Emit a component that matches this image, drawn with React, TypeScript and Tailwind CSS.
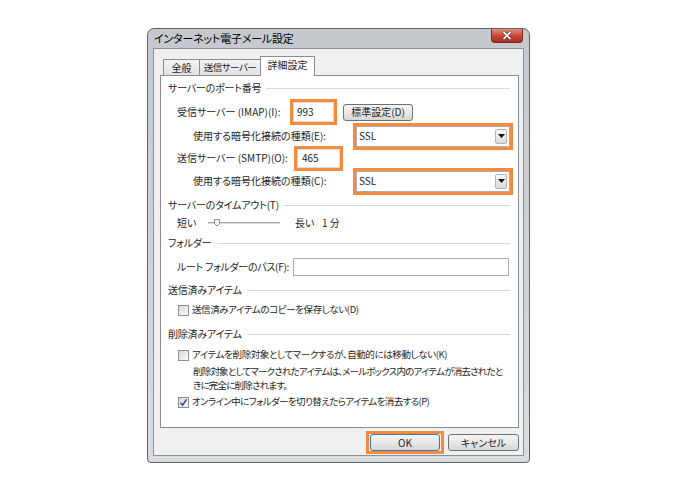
import React from 'react';

const ORANGE = 'border-[3px] border-[#f68b3d]';

function Section({ label, mt }: { label: string; mt: string }) {
  return (
    <div className={`flex items-center h-[18px] pl-[7px] pr-[8px] gap-[5px] ${mt}`}>
      <span className="whitespace-nowrap tracking-[-0.2px]">{label}</span>
      <div className="flex-1 h-px bg-[#d5d9dd]" />
    </div>
  );
}

function Checkbox({ checked }: { checked?: boolean }) {
  return (
    <span className="w-[11px] h-[11px] border border-[#8e8f8f] bg-gradient-to-br from-[#d8d8d8] to-[#fbfbfb] flex items-center justify-center shrink-0">
      {checked && (
        <svg viewBox="0 0 9 9" className="w-[9px] h-[9px]">
          <path d="M1.5 4.8 L3.6 7.2 L7.6 1.4" fill="none" stroke="#2d4b8e" strokeWidth={1.5} />
        </svg>
      )}
    </span>
  );
}

function Combo() {
  return (
    <div className={`${ORANGE} w-[160px] h-[27px] flex`}>
      <div className="flex-1 bg-white border border-[#abadb3] flex items-center pl-[2px] pr-[2px]">
        <span className="flex-1">SSL</span>
        <span className="w-[12px] h-[15px] border border-[#b5b5b5] rounded-[2px] bg-gradient-to-b from-[#f7f7f7] to-[#dcdcdc] flex items-center justify-center">
          <svg width="7" height="4" viewBox="0 0 7 4">
            <path d="M0 0h7L3.5 4z" fill="#111" />
          </svg>
        </span>
      </div>
    </div>
  );
}

function WinButton({ label, def, w }: { label: string; def?: boolean; w: string }) {
  return (
    <div
      className={`${w} h-[17px] flex items-center justify-center rounded-[3px] border ${
        def ? 'border-[#3d7bad]' : 'border-[#707070]'
      } bg-gradient-to-b from-[#f4f4f4] via-[#e9e9e9] to-[#d6d6d6] whitespace-nowrap`}
    >
      {label}
    </div>
  );
}

export default function App() {
  return (
    <div className="w-[676px] h-[492px] bg-white pt-[28px] pl-[147px] text-[10px] leading-none text-[#1e1e1e] font-['Noto_Sans_CJK_JP',sans-serif] [font-feature-settings:'palt']">
      {/* window frame */}
      <div className="w-[383px] h-[435px] border border-[#5f6368] rounded-t-[7px] rounded-b-[4px] bg-gradient-to-b from-[#c5c9cd] to-[#d9dcdf] flex flex-col px-[5px] pb-[6px]">
        {/* title bar */}
        <div className="h-[19px] flex items-start justify-between">
          <span className="self-center text-[11px] text-black pl-px tracking-[-0.2px]">インターネット電子メール設定</span>
          <div className="mr-[1px] w-[32px] h-[14px] rounded-b-[4px] border border-[#7a2a22] border-t-0 bg-gradient-to-b from-[#e28f7f] via-[#c8493a] to-[#a92c1f] flex items-center justify-center">
            <svg width="10" height="9" viewBox="0 0 10 9">
              <path d="M1.5 1 L8.5 8 M8.5 1 L1.5 8" stroke="#4a1510" strokeWidth={3} />
              <path d="M1.5 1 L8.5 8 M8.5 1 L1.5 8" stroke="#fff" strokeWidth={1.8} />
            </svg>
          </div>
        </div>

        {/* client area */}
        <div className="flex-1 border border-[#8b9095] bg-[#f0f0f0] flex flex-col pt-[7px] pl-[6px] pr-[4px] pb-px">
          {/* tabs */}
          <div className="h-[20px] flex items-end pl-[3px] whitespace-nowrap">
            <div className="w-[37px] h-[17px] border border-[#898c95] bg-gradient-to-b from-[#f4f4f4] to-[#e2e2e2] flex items-center justify-center">
              全般
            </div>
            <div className="w-[62px] h-[17px] -ml-px border border-[#898c95] bg-gradient-to-b from-[#f4f4f4] to-[#e2e2e2] flex items-center justify-center text-[9.5px] tracking-[-0.5px]">
              送信サーバー
            </div>
            <div className="relative z-10 w-[55px] h-[20px] -ml-px border border-b-0 border-[#898c95] bg-white flex items-start justify-center pt-[3px]">
              詳細設定
            </div>
          </div>

          {/* tab panel */}
          <div className="-mt-px h-[353px] border border-[#898c95] bg-white flex flex-col whitespace-nowrap">
            <Section label="サーバーのポート番号" mt="mt-[3px]" />

            <div className="flex items-center h-[18px] mt-[6px] pl-[16px]">
              <span className="w-[113px]">受信サーバー (IMAP)(I):</span>
              <div className={`${ORANGE} w-[47px] h-[26px] flex`}>
                <div className="flex-1 bg-white border border-[#d9dbe0] flex items-center pl-[3px]">993</div>
              </div>
              <div className="ml-[6px]">
                <WinButton label="標準設定(D)" w="w-[70px]" />
              </div>
            </div>

            <div className="flex items-center h-[18px] mt-[6px] pl-[32px]">
              <span className="w-[160px]">使用する暗号化接続の種類(E):</span>
              <Combo />
            </div>

            <div className="flex items-center h-[18px] mt-[4px] pl-[16px]">
              <span className="w-[117px]">送信サーバー (SMTP)(O):</span>
              <div className={`${ORANGE} w-[49px] h-[25px] flex`}>
                <div className="flex-1 bg-white border border-[#d9dbe0] flex items-center pl-[4px]">465</div>
              </div>
            </div>

            <div className="flex items-center h-[18px] mt-[5px] pl-[32px]">
              <span className="w-[160px]">使用する暗号化接続の種類(C):</span>
              <Combo />
            </div>

            <Section label="サーバーのタイムアウト(T)" mt="mt-[6px]" />

            <div className="flex items-center h-[18px] pl-[16px]">
              <span className="w-[31px]">短い</span>
              <svg width="72" height="10" viewBox="0 0 72 10" className="shrink-0">
                <rect x="0" y="4" width="72" height="2" fill="#dadada" />
                <rect x="0" y="4" width="72" height="1" fill="#a9a9a9" />
                <path d="M6.5 1.5 h5 v4 l-2.5 2.5 l-2.5 -2.5 z" fill="#f4f4f4" stroke="#8a8a8a" strokeWidth={1} />
              </svg>
              <span className="ml-[15px] w-[27px]">長い</span>
              <span>1 分</span>
            </div>

            <Section label="フォルダー" mt="mt-[2px]" />

            <div className="flex items-center h-[18px] mt-[6px] pl-[16px]">
              <span className="w-[116px] tracking-[-0.3px]">ルート フォルダーのパス(F):</span>
              <div className="w-[216px] h-[18px] bg-white border border-[#abadb3]" />
            </div>

            <Section label="送信済みアイテム" mt="mt-[5px]" />

            <div className="flex items-center h-[18px] mt-[2px] pl-[17px] gap-[3px]">
              <Checkbox />
              <span className="text-[9.5px] tracking-[-0.4px]">送信済みアイテムのコピーを保存しない(D)</span>
            </div>

            <Section label="削除済みアイテム" mt="mt-[6px]" />

            <div className="flex items-center h-[18px] mt-[3px] pl-[17px] gap-[3px]">
              <Checkbox />
              <span className="text-[9.5px] tracking-[-0.4px]">アイテムを削除対象としてマークするが、自動的には移動しない(K)</span>
            </div>

            <div className="h-[28px] pl-[32px] leading-[14px] text-[9.5px] tracking-[-0.8px]">
              <div>削除対象としてマークされたアイテムは、メールボックス内のアイテムが消去されたと</div>
              <div>きに完全に削除されます。</div>
            </div>

            <div className="flex items-center h-[18px] mt-[1px] pl-[17px] gap-[3px]">
              <Checkbox checked />
              <span className="text-[9.5px] tracking-[-0.6px]">オンライン中にフォルダーを切り替えたらアイテムを消去する(P)</span>
            </div>
          </div>

          {/* buttons */}
          <div className="mt-[3px] h-[23px] flex items-center justify-end gap-[4px]">
            <div className={`${ORANGE} w-[78px] h-[23px] p-px flex items-center`}>
              <WinButton label="OK" def w="w-[70px]" />
            </div>
            <WinButton label="キャンセル" w="w-[71px]" />
          </div>
        </div>
      </div>
    </div>
  );
}
